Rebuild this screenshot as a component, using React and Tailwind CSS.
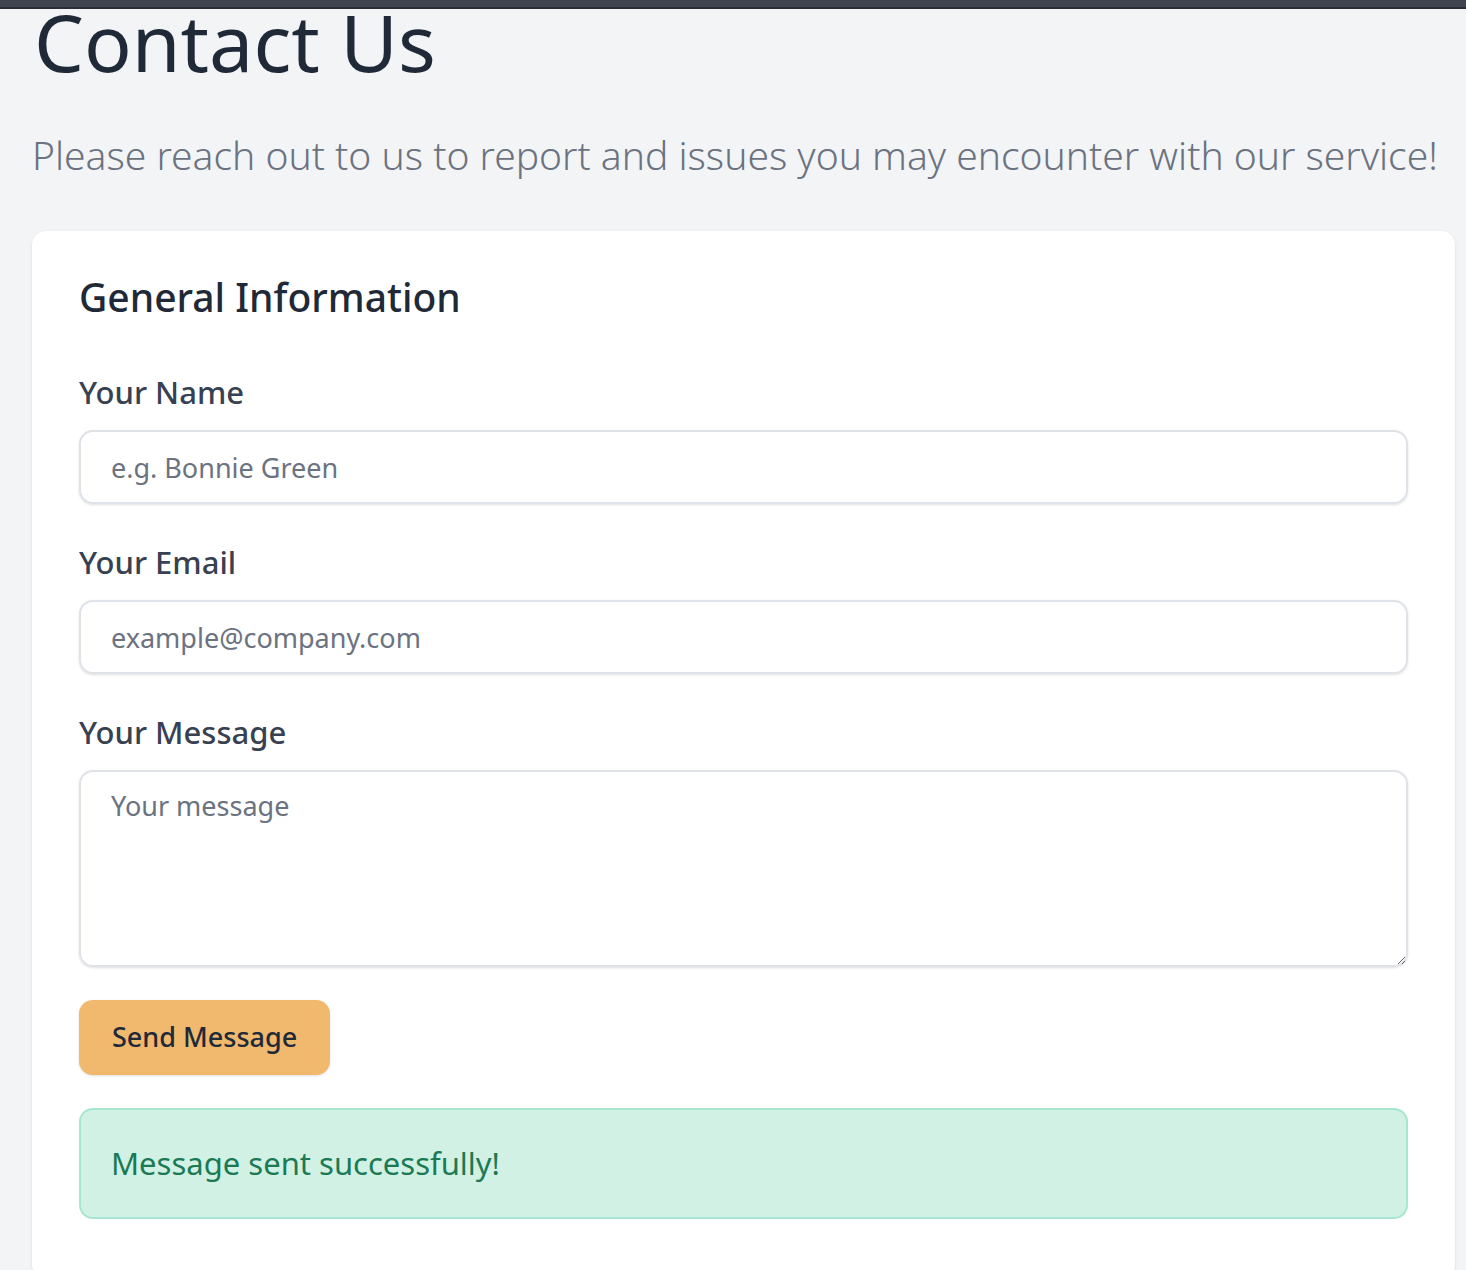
import React from "react";

export default function App() {
  return (
    <div className="min-h-[1270px] bg-[#f3f4f6] font-['Noto_Sans',sans-serif] overflow-hidden">
      <div className="h-[9px] bg-[#40444f] border-b-2 border-[#2b2e35]" />
      <div className="pl-[32px] pr-[11px]">
        <h1 className="ml-[2px] text-[79px] leading-[66px] font-normal text-[#1f2937]">
          Contact Us
        </h1>
        <p className="mt-[51px] text-[39px] leading-[57px] font-light text-[#6b7280] whitespace-nowrap">
          Please reach out to us to report and issues you may encounter with our service!
        </p>
        <div className="mt-[48px] bg-white rounded-[14px] shadow-sm px-[47px] pt-[43px] pb-[60px]">
          <h2 className="text-[39px] leading-[45px] font-medium text-[#1f2937]">
            General Information
          </h2>
          <form className="mt-[52px] flex flex-col" onSubmit={(e) => e.preventDefault()}>
            <label className="text-[31px] leading-[42px] font-medium text-[#374151]">Your Name</label>
            <input
              className="mt-[17px] h-[74px] border-2 border-[#dfe2e7] rounded-[14px] px-[30px] text-[27px] text-[#374151] placeholder:text-[#6b7280] shadow-sm outline-none"
              placeholder="e.g. Bonnie Green"
            />
            <label className="mt-[37px] text-[31px] leading-[42px] font-medium text-[#374151]">Your Email</label>
            <input
              className="mt-[17px] h-[74px] border-2 border-[#dfe2e7] rounded-[14px] px-[30px] text-[27px] text-[#374151] placeholder:text-[#6b7280] shadow-sm outline-none"
              placeholder="example@company.com"
            />
            <label className="mt-[37px] text-[31px] leading-[42px] font-medium text-[#374151]">Your Message</label>
            <textarea
              className="mt-[17px] h-[197px] border-2 border-[#dfe2e7] rounded-[14px] px-[30px] py-[15px] text-[27px] leading-[38px] text-[#374151] placeholder:text-[#6b7280] shadow-sm outline-none"
              placeholder="Your message"
            />
            <div className="mt-[33px]">
              <button className="h-[75px] px-[33px] rounded-[14px] bg-[#f0b96e] text-[27px] font-medium text-[#1f2937] shadow-sm">
                Send Message
              </button>
            </div>
            <div className="mt-[33px] h-[111px] flex items-center px-[30px] rounded-[14px] bg-[#d1f1e4] border-2 border-[#a9e6cf] text-[31px] text-[#1b7a54]">
              Message sent successfully!
            </div>
          </form>
        </div>
      </div>
    </div>
  );
}
